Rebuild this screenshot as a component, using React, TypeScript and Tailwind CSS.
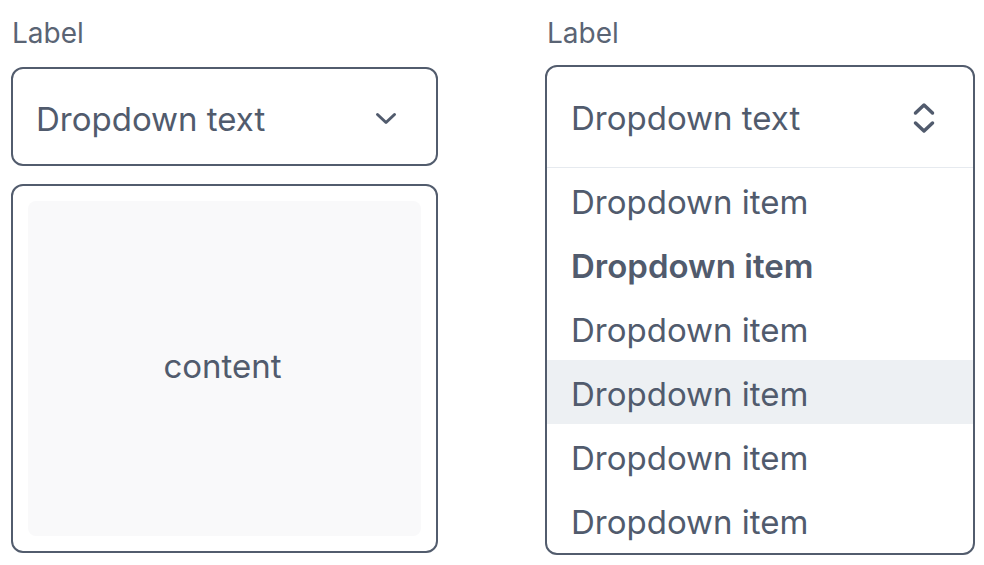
const ChevronDown = () => (
  <svg width="22" height="13" viewBox="0 0 22 13" fill="none" className="shrink-0">
    <path d="M2.5 2.5 L11 10.5 L19.5 2.5" stroke="currentColor" strokeWidth="3" strokeLinecap="round" strokeLinejoin="round" />
  </svg>
);

const ChevronsUpDown = () => (
  <svg width="24" height="36" viewBox="0 0 24 36" fill="none" className="shrink-0">
    <path d="M3.5 13 L12 5 L20.5 13" stroke="currentColor" strokeWidth="3.5" strokeLinecap="round" strokeLinejoin="round" />
    <path d="M3.5 23 L12 31 L20.5 23" stroke="currentColor" strokeWidth="3.5" strokeLinecap="round" strokeLinejoin="round" />
  </svg>
);

const items = [
  { label: "Dropdown item" },
  { label: "Dropdown item", bold: true },
  { label: "Dropdown item" },
  { label: "Dropdown item", active: true },
  { label: "Dropdown item" },
  { label: "Dropdown item" },
];

export default function App() {
  return (
    <div
      className="w-[984px] h-[565px] bg-white text-[#515b6d] flex items-start pt-[16px]"
      style={{ fontFamily: "Inter, 'Noto Sans', sans-serif" }}
    >
      {/* closed dropdown */}
      <div className="ml-[11px] w-[427px] flex flex-col">
        <span className="pl-[1px] text-[28px] leading-[34px] text-[#5a6474]">Label</span>
        <div className="mt-[17px] h-[99px] border-2 border-[#525c6d] rounded-[12px] flex items-center justify-between pl-[23px] pr-[39px] pt-[4px]">
          <span className="text-[33px] leading-[40px]">Dropdown text</span>
          <ChevronDown />
        </div>
        <div className="mt-[18px] h-[369px] border-2 border-[#525c6d] rounded-[12px] p-[15px]">
          <div className="w-full h-full bg-[#f9f9fa] rounded-[8px] flex items-center justify-center">
            <span className="text-[33px] leading-[40px] -mt-[6px] -ml-[4px]">content</span>
          </div>
        </div>
      </div>

      {/* open dropdown */}
      <div className="ml-[107px] w-[430px] flex flex-col">
        <span className="pl-[2px] text-[28px] leading-[34px] text-[#5a6474]">Label</span>
        <div className="mt-[15px] h-[490px] border-2 border-[#525c6d] rounded-[12px] overflow-hidden flex flex-col">
          <div className="h-[101px] shrink-0 border-b border-[#e6eaef] flex items-center justify-between pl-[24px] pr-[37px] pt-[2px]">
            <span className="text-[33px] leading-[40px]">Dropdown text</span>
            <ChevronsUpDown />
          </div>
          {items.map((item, i) => (
            <div
              key={i}
              className={`h-[64px] shrink-0 flex items-center pl-[24px] pt-[3px] ${item.active ? "bg-[#edf0f3]" : ""}`}
            >
              <span className={`text-[33px] leading-[40px] ${item.bold ? "font-semibold" : ""}`}>
                {item.label}
              </span>
            </div>
          ))}
        </div>
      </div>
    </div>
  );
}
